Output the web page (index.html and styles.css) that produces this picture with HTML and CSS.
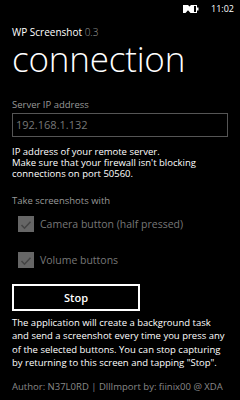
FILE: index.html
```html
<!DOCTYPE html>
<html lang="en">

<head>
    <meta charset="UTF-8">
    <meta name="viewport" content="width=device-width, initial-scale=1.0">
    <link rel="stylesheet" href="styles.css">
</head>

<body>
    <div class="statusbar">
        <svg class="battery" width="16" height="8" viewBox="0 0 16 8">
            <path d="M0 0h5l1.5 1.6L8 0h2v8H7.5L5 5.2 2.5 8H0z" fill="#fff"></path>
            <rect x="10.5" y="0.5" width="3" height="7" fill="none" stroke="#fff"></rect>
            <rect x="14" y="2.5" width="1.5" height="3" fill="#fff"></rect>
        </svg>
        <span class="clock">11:02</span>
    </div>

    <div class="page">
        <div class="app-title">WP Screenshot <span class="version">0.3</span></div>
        <h1 class="page-title">connection</h1>

        <div class="field-label">Server IP address</div>
        <div class="textbox">192.168.1.132</div>
        <p class="hint">IP address of your remote server.<br>Make sure that your firewall isn't blocking connections on port 50560.</p>

        <div class="field-label group-label">Take screenshots with</div>
        <div class="check">
            <span class="box">
                <svg width="16" height="16" viewBox="0 0 16 16">
                    <path d="M3.5 8l3 3.2 6-6.4" fill="none" stroke="#444" stroke-width="1.6"></path>
                </svg>
            </span>
            <span class="check-text">Camera button (half pressed)</span>
        </div>
        <div class="check">
            <span class="box">
                <svg width="16" height="16" viewBox="0 0 16 16">
                    <path d="M3.5 8l3 3.2 6-6.4" fill="none" stroke="#444" stroke-width="1.6"></path>
                </svg>
            </span>
            <span class="check-text">Volume buttons</span>
        </div>

        <div class="button">Stop</div>
        <p class="info">The application will create a background task and send a screenshot every time you press any of the selected buttons. You can stop capturing by returning to this screen and tapping "Stop".</p>

        <div class="author">Author: N37L0RD | DllImport by: fiinix00 @ XDA</div>
    </div>
</body>

</html>
```

FILE: styles.css
```css
body {
    margin: 0;
    width: 240px;
    height: 400px;
    background: #000;
    color: #fff;
    font-family: "Open Sans", "Noto Sans", sans-serif;
    overflow: hidden;
}

.statusbar {
    display: flex;
    justify-content: flex-end;
    align-items: center;
    height: 17px;
    padding-right: 6px;
}

.battery {
    margin-right: 12px;
}

.clock {
    font-size: 9px;
}

.page {
    padding: 0 12px;
}

.app-title {
    margin-top: 8px;
    font-size: 10px;
    line-height: 14px;
}

.version {
    color: #999;
    font-weight: 300;
}

.page-title {
    margin: 0;
    font-size: 35px;
    font-weight: 300;
    line-height: 40px;
    letter-spacing: -0.2px;
}

.field-label {
    margin-top: 19px;
    font-size: 9.5px;
    line-height: 13px;
    color: #999;
}

.textbox {
    margin-top: 2px;
    height: 22px;
    border: 1px solid #555;
    padding-left: 3px;
    font-size: 11px;
    line-height: 22px;
    color: #777;
}

.hint {
    margin: 9px 0 0;
    font-size: 9.5px;
    line-height: 11px;
}

.group-label {
    margin-top: 15px;
}

.check {
    display: flex;
    align-items: center;
    margin-top: 9px;
    margin-left: 6px;
    height: 16px;
}

.check + .check {
    margin-top: 20px;
}

.box {
    width: 16px;
    height: 16px;
    background: #666;
    margin-right: 6px;
}

.check-text {
    font-size: 10.5px;
    color: #777;
}

.button {
    margin-top: 16px;
    width: 124px;
    height: 23px;
    border: 2px solid #fff;
    text-align: center;
    font-size: 11px;
    font-weight: 600;
    line-height: 23px;
}

.info {
    margin: 5px 0 0;
    font-size: 9.5px;
    line-height: 13.3px;
}

.author {
    margin-top: 11px;
    font-size: 9.5px;
    line-height: 13px;
    color: #888;
}
```
